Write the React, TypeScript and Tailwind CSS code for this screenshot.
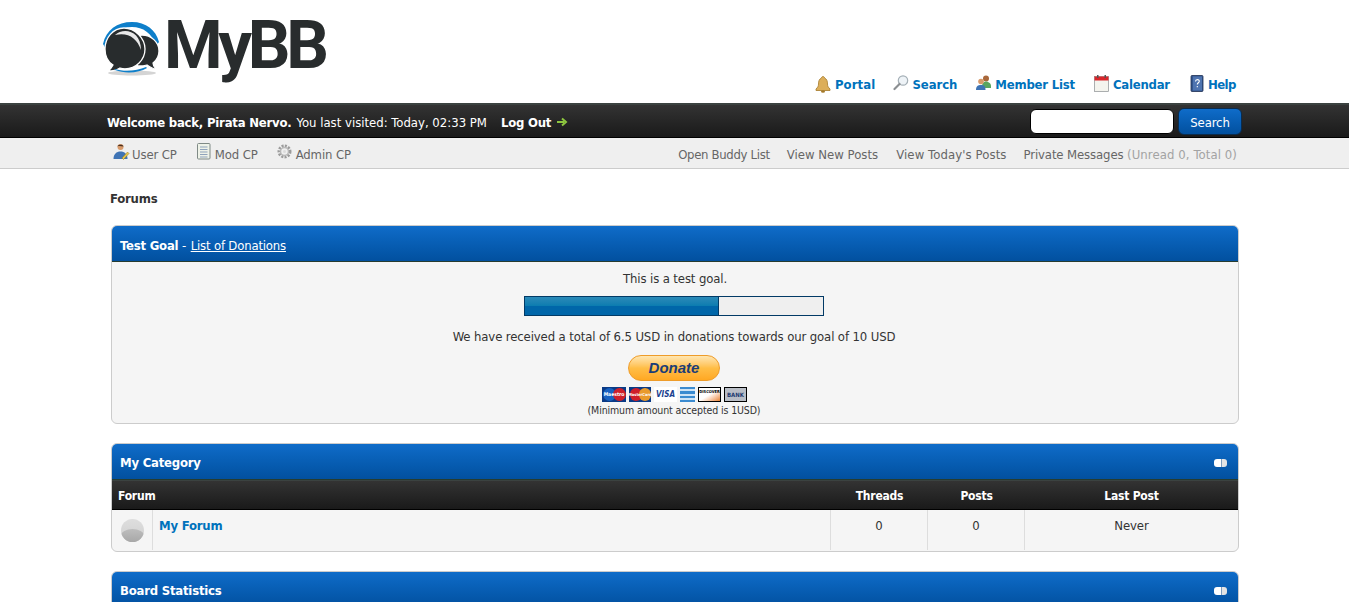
const font = "font-['DejaVu_Sans_Condensed','DejaVu_Sans',sans-serif]"
const boldText = "font-bold tracking-[-0.22px]"

function BellIcon() {
  return (
    <svg width="16" height="17" viewBox="0 0 16 17">
      <path d="M8 .5c-1 0-1.500.8-1.500 1.500C4 3 3.500 5.500 3.500 8c0 2.500-1 3.500-2.500 5v1.500h14V13c-1.500-1.500-2.500-2.500-2.500-5 0-2.500-.5-5-3-6C9.500 1.300 9 .5 8 .5z" fill="#dcae5a" stroke="#a57a2a" strokeWidth=".8" />
      <ellipse cx="8" cy="15.500" rx="2" ry="1.300" fill="#a57a2a" />
    </svg>
  )
}

function MagnifierIcon() {
  return (
    <svg width="16" height="16" viewBox="0 0 16 16">
      <circle cx="10" cy="5.500" r="4.700" fill="#eef3f7" stroke="#a4afb6" strokeWidth="1.200" />
      <path d="M6.500 9L1.500 14" stroke="#8b8f92" strokeWidth="2.200" strokeLinecap="round" />
    </svg>
  )
}

function MembersIcon() {
  return (
    <svg width="17" height="16" viewBox="0 0 17 16">
      <circle cx="11" cy="3.500" r="3" fill="#a9683b" />
      <path d="M7 11c0-3 2-4.500 4-4.500s5 1.500 5 4.500v2H7z" fill="#5aa55f" />
      <circle cx="6" cy="6.500" r="2.800" fill="#d89a6a" />
      <path d="M1 15c0-4 2-5 5-5s4.500 1 4.500 5z" fill="#3f74b5" />
    </svg>
  )
}

function CalendarIcon() {
  return (
    <svg width="15" height="17" viewBox="0 0 15 17">
      <rect x=".5" y="1.500" width="14" height="15" fill="#f4f4ee" stroke="#8b8f92" strokeWidth=".7" />
      <rect x=".5" y="1.500" width="14" height="4" fill="#d9262b" />
      <rect x="3" y="0" width="1.500" height="3" fill="#555" />
      <rect x="10.500" y="0" width="1.500" height="3" fill="#555" />
    </svg>
  )
}

function HelpIcon() {
  return (
    <svg width="14" height="17" viewBox="0 0 14 17">
      <rect x="1" y=".5" width="12" height="16" rx="1" fill="#33568f" stroke="#1e2f52" strokeWidth=".8" />
      <rect x="3" y="1.500" width="9" height="14" fill="#4f74b0" />
      <path d="M5.500 6.500c0-2.500 3.800-2.500 3.800-.2 0 1.500-2 1.500-2 3.200M7.300 11v1.200" stroke="#fff" strokeWidth="1.100" fill="none" />
    </svg>
  )
}

function UserCpIcon() {
  return (
    <svg width="17" height="17" viewBox="0 0 17 17">
      <circle cx="7.500" cy="4" r="3" fill="#d89a6a" />
      <path d="M4.500 3.500c0-2.500 6-2.500 6 0-2 0-4-1-6 0z" fill="#4a3222" />
      <path d="M.5 16c0-5 3-7.500 7-7.500s7 2.500 7 7.500z" fill="#3f74b5" />
      <path d="M9 15l5.500-6 1.500 1.500L10.500 16.500z" fill="#e8c64c" stroke="#8c7420" strokeWidth=".5" />
    </svg>
  )
}

function ModCpIcon() {
  return (
    <svg width="14" height="17" viewBox="0 0 14 17">
      <rect x=".5" y=".5" width="12.500" height="15.500" rx="1" fill="#eef2e8" stroke="#7f8a86" />
      <path d="M3 4h7.500M3 6.500h7.500M3 9h7.500M3 11.500h7.500M3 14h7.500" stroke="#8fa3bb" />
    </svg>
  )
}

function AdminCpIcon() {
  return (
    <svg width="15" height="15" viewBox="0 0 15 15">
      <circle cx="7.500" cy="7.500" r="5.500" fill="none" stroke="#9b9b9b" strokeWidth="3" strokeDasharray="2 1.200" />
      <circle cx="7.500" cy="7.500" r="4" fill="none" stroke="#b9b9b9" strokeWidth="1.500" />
      <circle cx="7.500" cy="7.500" r="1.500" fill="#dcdcdc" />
    </svg>
  )
}

function LogoBubbles() {
  return (
    <svg width="60" height="60" viewBox="0 0 60 60">
      <ellipse cx="30" cy="53" rx="24" ry="2.500" fill="#d4d4d4" />
      <path d="M1 24C4 10 15 2 30 2c14 0 24 8 27 20l-3 4C50 13 41 7 30 7 18 7 7 14 4 29z" fill="#0e7fca" />
      <path d="M32 17c-2 2-2 28 4 29 3 0 6 0 9-1 3 2 6 4 9 4-2-2-3-4-3-6 4-3 6-7 6-12 0-9-8-16-17-16-3 0-6 1-8 2z" fill="#282c2d" stroke="#fff" strokeWidth="1.300" />
      <path d="M22 8C11 8 3 18 3 29c0 7 3 13 8 16-1 2-2 4-5 6 5 0 9-1 12-3 2 .6 3 .8 5 .8 11 0 20-9 20-19.800S33 8 22 8z" fill="#282c2d" stroke="#fff" strokeWidth="1.300" />
      <path d="M13 15c9-8 26-4 26 15-4-12-13-18-26-15z" fill="#e8e8e8" />
      <path d="M13 49c9 3 22 2 31-2l1 1c-8 5-22 6-32 2z" fill="#0e7fca" />
    </svg>
  )
}

function CollapseIcon() {
  return (
    <span className="mt-[3px] flex h-2 w-[13px] overflow-hidden rounded-[3px]">
      <span className="w-[7px] bg-white" />
      <span className="w-[6px] border-l border-[#7f9dbd] bg-[#e4e4e4]" />
    </span>
  )
}

function ThemeHead({ children }: { children: React.ReactNode }) {
  return (
    <div className="flex h-9 items-center justify-between rounded-t-[5px] border-b border-[#263c30] bg-gradient-to-b from-[#0f6cc9] to-[#02509f] pl-2 pr-[11px] text-white">
      {children}
    </div>
  )
}

function CardLogos() {
  return (
    <div className="mr-[1px] flex items-center justify-center gap-[3px]">
      <div className="relative flex h-[15px] w-6 overflow-hidden bg-[#0a3a86]">
        <span className="mt-[1px] ml-[1px] h-[13px] w-[13px] rounded-full bg-[#1762c2]" />
        <span className="mt-[1px] -ml-[3px] h-[13px] w-[13px] rounded-full bg-[#cf1f2a]" />
        <span className="absolute inset-0 flex items-center justify-center text-[5px] font-bold tracking-normal text-white">Maestro</span>
      </div>
      <div className="relative flex h-[15px] w-[22px] overflow-hidden bg-[#0a3a86]">
        <span className="mt-[1px] ml-[1px] h-[13px] w-[12px] rounded-full bg-[#cf1f2a]" />
        <span className="mt-[1px] -ml-[3px] h-[13px] w-[12px] rounded-full bg-[#e89a2c]" />
        <span className="absolute inset-0 flex items-center justify-center text-[4px] font-bold tracking-normal text-white">MasterCard</span>
      </div>
      <div className="flex h-[15px] w-[23px] items-center justify-center bg-white text-[8px] font-bold italic tracking-normal text-[#1a3f8f]">VISA</div>
      <div className="flex h-[15px] w-[15px] flex-col justify-between bg-[#3b8bd0] py-[2px]">
        <span className="h-[2px] bg-[#cfe3f5]" />
        <span className="h-[2px] bg-[#cfe3f5]" />
        <span className="h-[2px] bg-[#cfe3f5]" />
      </div>
      <div className="flex h-[15px] w-[23px] items-start justify-center border border-black bg-gradient-to-br from-white via-white to-[#e5822a] pt-[1px] text-[4px] leading-[6px] font-bold tracking-normal text-black">DISCOVER</div>
      <div className="flex h-[15px] w-[23px] items-center justify-center border border-black bg-[#b9bec6] text-[6px] font-bold tracking-normal text-[#1d3a70]">BANK</div>
    </div>
  )
}

export default function App() {
  return (
    <div className={`${font} h-[602px] overflow-hidden bg-white text-[13px] tracking-[-0.12px] text-[#333]`}>
      {/* Header */}
      <div className="mx-auto h-[103px] w-[1129px]">
        <div className="flex h-full items-start justify-between">
          <div className="-ml-2 mt-[13px] flex items-start">
            <div className="mt-[7px]"><LogoBubbles /></div>
            <span className="ml-[2px] font-['Roboto',sans-serif] text-[67px] font-bold leading-[64px] tracking-[-4.3px] text-[#282c2d]">MyBB</span>
          </div>
          <div className={`mt-[75px] mr-[3px] flex items-center ${boldText} text-[#0072bc]`}>
            <span className="flex items-center gap-[4px]"><span className="mb-[1px]"><BellIcon /></span><span className="tracking-[0.1px]">Portal</span></span>
            <span className="ml-[18px] flex items-center gap-[3px]"><span className="mb-[4px]"><MagnifierIcon /></span><span className="tracking-[-0.05px]">Search</span></span>
            <span className="ml-[18px] flex items-center gap-[3px]"><span className="mb-[4px]"><MembersIcon /></span>Member List</span>
            <span className="ml-[19px] flex items-center gap-[4px]"><span className="mb-[3px]"><CalendarIcon /></span>Calendar</span>
            <span className="ml-[20px] flex items-center gap-[4px]"><span className="mb-[3px]"><HelpIcon /></span><span className="tracking-[-0.5px]">Help</span></span>
          </div>
        </div>
      </div>

      {/* User bar */}
      <div className="h-[35px] border-t-[2px] border-b border-t-[#3b4240] border-b-black bg-gradient-to-b from-[#333] to-[#1a1a1a] text-white">
        <div className="mx-auto flex h-full w-[1135px] items-center justify-between">
          <div className="flex items-center pt-[4px]">
            <b className={boldText}>Welcome back, Pirata Nervo.</b>
            <span className="ml-[5px] tracking-normal">You last visited: Today, 02:33 PM</span>
            <b className={`ml-[14px] ${boldText}`}>Log Out</b>
            <svg className="ml-[5px] mb-[3px]" width="12" height="10" viewBox="0 0 12 10">
              <path d="M1 5h7M6 1.500L10 5 6 8.500" stroke="#8dc63f" strokeWidth="2" fill="none" />
            </svg>
          </div>
          <div className="flex items-center gap-[4px]">
            <div className="h-[25px] w-[144px] rounded-[6px] border border-black bg-white" />
            <div className="flex h-[27px] w-[64px] items-center justify-center rounded-[6px] border border-[#0a2c4e] bg-gradient-to-b from-[#0f6cc9] to-[#02509f] pt-[4px] text-white">Search</div>
          </div>
        </div>
      </div>

      {/* Panel links */}
      <div className="h-[31px] border-b border-[#ccc] bg-[#efefef] text-[#666]">
        <div className="mx-auto flex h-full w-[1129px] items-center justify-between">
          <div className="ml-[3px] flex items-center">
            <span className="flex items-center gap-[2px]"><span className="mb-[3px]"><UserCpIcon /></span><span className="pt-[4px]">User CP</span></span>
            <span className="ml-[20px] flex items-center gap-[4px]"><span className="mb-[3px]"><ModCpIcon /></span><span className="pt-[4px]">Mod CP</span></span>
            <span className="ml-[19px] flex items-center gap-[4px]"><span className="mb-[3px]"><AdminCpIcon /></span><span className="pt-[4px]">Admin CP</span></span>
          </div>
          <div className="mr-[2px] flex items-center gap-[17px] pt-[4px]">
            <span className="tracking-[-0.32px]">Open Buddy List</span>
            <span className="mr-[1px] tracking-[0.02px]">View New Posts</span>
            <span className="tracking-[0.1px]">View Today's Posts</span>
            <span>Private Messages <span className="tracking-[0.09px] text-[#a3a3a3]">(Unread 0, Total 0)</span></span>
          </div>
        </div>
      </div>

      {/* Content */}
      <div className="mx-auto w-[1129px]">
        <div className={`mt-[22px] leading-[16px] ${boldText}`}>Forums</div>

        <div className="mt-[18px] ml-[1px] w-[1128px] rounded-[6px] border border-[#ccc] bg-[#f5f5f5]">
          <ThemeHead>
            <div className="pt-[4px]">
              <b className={boldText}>Test Goal</b> - <span className="ml-[1px] tracking-[-0.18px] underline">List of Donations</span>
            </div>
          </ThemeHead>
          <div className="flex h-[161px] flex-col items-center">
            <div className="mt-[9px] leading-[16px]">This is a test goal.</div>
            <div className="mt-[9px] mr-[2px] flex h-5 w-[300px] border border-[#023a66] bg-[#efefef]">
              <div className="w-[194px] border-r border-[#023a66] bg-gradient-to-b from-[#2a8ab8] via-[#0a7cb0] via-50% to-[#0066a9] to-50%" />
            </div>
            <div className="mt-[13px] mr-[2px] leading-[16px]">We have received a total of 6.5 USD in donations towards our goal of 10 USD</div>
            <div className="mt-[10px] mr-[2px] flex h-[26px] w-[92px] items-center justify-center rounded-full border border-[#ee9c2a] bg-gradient-to-b from-[#ffe6b0] via-[#ffbe46] to-[#ffa822] font-['Liberation_Sans',sans-serif] text-[15px] font-bold italic tracking-normal text-[#1b3d77]">Donate</div>
            <div className="mt-[6px]"><CardLogos /></div>
            <div className="mt-[1px] mr-[2px] text-[10.5px] leading-[14px] tracking-[-0.12px]">(Minimum amount accepted is 1USD)</div>
          </div>
        </div>

        <div className="mt-[19px] ml-[1px] w-[1128px] rounded-[6px] border border-[#ccc] bg-[#f5f5f5]">
          <ThemeHead>
            <b className={`pt-[2px] ${boldText}`}>My Category</b>
            <CollapseIcon />
          </ThemeHead>
          <div className={`grid h-[30px] grid-cols-[719px_97px_97px_1fr] items-center border-t border-b border-t-[#3b4240] border-b-black bg-gradient-to-b from-[#333] to-[#1a1a1a] pt-[2px] text-[12px] text-white ${boldText}`}>
            <span className="pl-[6px]">Forum</span>
            <span className="text-center">Threads</span>
            <span className="text-center">Posts</span>
            <span className="text-center">Last Post</span>
          </div>
          <div className="mb-[1px] grid h-[40px] grid-cols-[41px_678px_97px_97px_1fr] rounded-b-[6px]">
            <div className="flex items-center justify-center border-r border-[#ddd]">
              <span className="relative h-[23px] w-[23px] overflow-hidden rounded-full bg-gradient-to-b from-[#dedede] to-[#cfcfcf]">
                <span className="absolute right-0 bottom-0 left-0 h-[13px] rounded-t-[50%] bg-gradient-to-b from-[#bdbdbd] to-[#a8a8a8]" />
              </span>
            </div>
            <div className={`border-r border-[#ddd] pl-[6px] pt-[8px] leading-[16px] text-[#0072bc] ${boldText}`}>My Forum</div>
            <div className="border-r border-[#ddd] pt-[8px] text-center leading-[16px]">0</div>
            <div className="border-r border-[#ddd] pt-[8px] text-center leading-[16px]">0</div>
            <div className="pt-[8px] text-center leading-[16px]">Never</div>
          </div>
        </div>

        <div className="mt-[19px] ml-[1px] w-[1128px] rounded-[6px] border border-[#ccc] bg-[#f5f5f5]">
          <ThemeHead>
            <b className={`pt-[2px] ${boldText}`}>Board Statistics</b>
            <CollapseIcon />
          </ThemeHead>
        </div>
      </div>
    </div>
  )
}
